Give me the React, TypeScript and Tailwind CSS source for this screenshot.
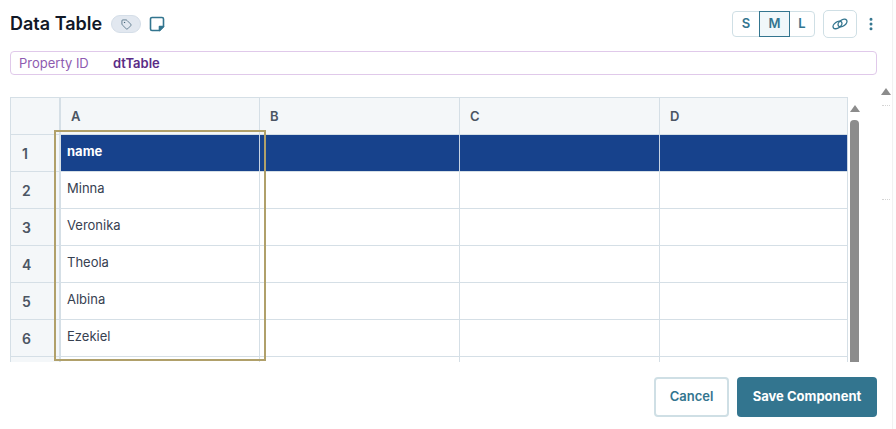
import { MoreVertical, Tag } from 'lucide-react';

const rows = ['name', 'Minna', 'Veronika', 'Theola', 'Albina', 'Ezekiel'];
const columns = [
  { label: 'A', width: 'w-[199px]' },
  { label: 'B', width: 'w-[200px]' },
  { label: 'C', width: 'w-[200px]' },
  { label: 'D', width: 'w-[188px]' },
];

const StickyNote = () => (
  <svg width="16" height="16" viewBox="0 0 16 16" fill="none" stroke="#33758f" strokeWidth="1.6">
    <path d="M3 1.5h10a1.5 1.5 0 0 1 1.5 1.5v7.5l-4 4H3A1.5 1.5 0 0 1 1.5 13V3A1.5 1.5 0 0 1 3 1.5Z" strokeLinejoin="round" />
    <path d="M14.5 10.5h-4v4Z" fill="#33758f" strokeLinejoin="round" />
  </svg>
);

const ChainLink = () => (
  <svg width="18" height="14" viewBox="0 0 18 14" fill="none" stroke="#33758f" strokeWidth="1.4">
    <ellipse cx="6.5" cy="8" rx="5" ry="3" transform="rotate(-35 6.5 8)" />
    <ellipse cx="11.5" cy="6" rx="5" ry="3" transform="rotate(-35 11.5 6)" />
  </svg>
);

const Scrollbar = () => (
  <div className="w-[9px] ml-[2px] flex flex-col items-center shrink-0">
    <div className="mt-[8px] w-0 h-0 border-x-[5px] border-x-transparent border-b-[7px] border-b-[#8c8c8c]" />
    <div className="mt-[8px] w-[9px] flex-1 bg-[#8c8c8c] rounded-t-[4px]" />
  </div>
);

const App = () => {
  return (
    <div className="w-[896px] h-[429px] bg-white overflow-hidden flex font-['Inter',sans-serif]">
      <div className="w-[893px] flex flex-col border-r border-[#f1f1f1]">
        <div className="h-[51px] pl-[10px] pr-[13px] flex items-center">
          <h1 className="text-[18px] leading-[24px] font-semibold text-[#111827] mt-[-3px]">Data Table</h1>
          <div className="ml-[9px] mt-[-3px] w-[30px] h-[18px] rounded-full bg-[#e2e8f0] border border-[#d5dee8] flex items-center justify-center">
            <Tag size={11} strokeWidth={1.5} color="#33586e" />
          </div>
          <div className="ml-[8px] mt-[-3px]">
            <StickyNote />
          </div>
          <div className="ml-auto mt-[-3px] flex items-center">
            <div className="flex h-[26px] rounded-[4px] border border-[#cfdfe5] text-[13px] font-semibold text-[#33758f]">
              <div className="w-[26px] flex items-center justify-center">S</div>
              <div className="w-[31px] my-[-1px] flex items-center justify-center border border-[#33758f] bg-[#f0f7fa]">M</div>
              <div className="w-[24px] flex items-center justify-center">L</div>
            </div>
            <div className="ml-[8px] w-[34px] h-[28px] rounded-[5px] border border-[#cfdfe5] flex items-center justify-center">
              <ChainLink />
            </div>
            <MoreVertical size={16} strokeWidth={2.5} color="#33758f" className="ml-[6px]" />
          </div>
        </div>

        <div className="ml-[10px] w-[867px] h-[24px] rounded-[4px] border border-[#e0c9ea] flex items-center pl-[8px] pt-[1px] text-[13px]">
          <span className="w-[94px] text-[#8e5bb0]">Property ID</span>
          <span className="font-semibold text-[#5b2c86]">dtTable</span>
        </div>

        <div className="mt-[22px] ml-[10px] flex h-[265px] relative">
          <div className="w-[838px] overflow-hidden">
            <div className="flex h-[38px] bg-[#f4f7f9] border-y border-[#d5dfe6] text-[13px] font-semibold text-[#4b5563]">
              <div className="w-[51px] shrink-0 border-x border-[#d5dfe6] border-r-2" />
              {columns.map((col) => (
                <div key={col.label} className={`${col.width} shrink-0 border-r border-[#d5dfe6] flex items-center pl-[10px] pt-[2px]`}>
                  {col.label}
                </div>
              ))}
            </div>
            {rows.map((row, i) => (
              <div key={row} className="flex h-[37px] border-b border-[#d5dfe6]">
                <div className="w-[51px] shrink-0 bg-[#f4f7f9] border-x border-[#d5dfe6] border-r-2 flex items-center pl-[11px] text-[14px] font-semibold text-[#4b5563]">
                  {i + 1}
                </div>
                {columns.map((col, j) => (
                  <div
                    key={col.label}
                    className={`${col.width} shrink-0 border-r flex items-center pl-[6px] pb-[2px] text-[13px] ${
                      i === 0 ? 'bg-[#17428c] border-[#c7d3e3] font-bold text-white' : 'border-[#d5dfe6] text-[#374151]'
                    }`}
                  >
                    {j === 0 ? row : ''}
                  </div>
                ))}
              </div>
            ))}
            <div className="flex h-[6px]">
              <div className="w-[51px] shrink-0 bg-[#f4f7f9] border-x border-[#d5dfe6] border-r-2" />
              {columns.map((col) => (
                <div key={col.label} className={`${col.width} shrink-0 border-r border-[#d5dfe6]`} />
              ))}
            </div>
          </div>
          <Scrollbar />
          <div className="absolute left-[44px] top-[33px] w-[212px] h-[231px] border-2 border-[#b0a06a] pointer-events-none" />
        </div>

        <div className="mt-[15px] pr-[15px] flex justify-end gap-[8px]">
          <button className="w-[75px] h-[40px] rounded-[4px] border-2 border-[#cfdfe5] bg-white text-[13px] font-semibold text-[#33758f]">
            Cancel
          </button>
          <button className="w-[140px] h-[40px] rounded-[4px] bg-[#33758f] text-[13px] font-bold text-white">
            Save Component
          </button>
        </div>
      </div>
      <div className="flex-1 relative bg-[#fdfdfd]">
        <div className="absolute left-[-12px] top-[88px] w-0 h-0 border-x-[5px] border-x-transparent border-b-[7px] border-b-[#8c8c8c]" />
        <div className="absolute left-[-11px] top-[105px] w-[8px] border-t border-dotted border-[#d4d4d4]" />
        <div className="absolute left-[-11px] top-[199px] w-[8px] border-t border-dotted border-[#d4d4d4]" />
      </div>
    </div>
  );
};

export default App;
